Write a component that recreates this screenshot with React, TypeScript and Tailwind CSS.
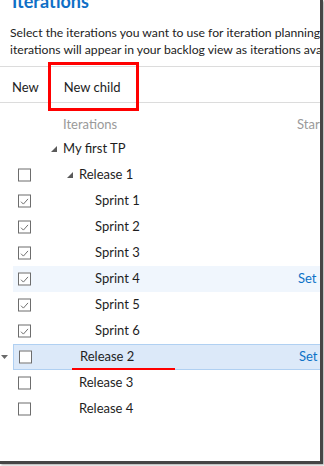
import * as React from 'react';

type Row = {
    label: string;
    level: 0 | 1 | 2;
    check: 'none' | 'off' | 'on';
    expand?: boolean;
    hover?: boolean;
    selected?: boolean;
    link?: boolean;
};

const rows: Row[] = [
    { label: 'My first TP', level: 0, check: 'none', expand: true },
    { label: 'Release 1', level: 1, check: 'off', expand: true },
    { label: 'Sprint 1', level: 2, check: 'on' },
    { label: 'Sprint 2', level: 2, check: 'on' },
    { label: 'Sprint 3', level: 2, check: 'on' },
    { label: 'Sprint 4', level: 2, check: 'on', hover: true, link: true },
    { label: 'Sprint 5', level: 2, check: 'on' },
    { label: 'Sprint 6', level: 2, check: 'on' },
    { label: 'Release 2', level: 1, check: 'off', selected: true, link: true },
    { label: 'Release 3', level: 1, check: 'off' },
    { label: 'Release 4', level: 1, check: 'off' },
];

function Expander() {
    return (
        <svg width="6" height="6" viewBox="0 0 6 6" className="shrink-0">
            <polygon points="6,0 6,6 0,6" fill="#5a5a5a" />
        </svg>
    );
}

function CheckBox({ checked }: { checked: boolean }) {
    return (
        <div className="w-[13px] h-[13px] border border-[#6d6d6d] bg-white flex items-center justify-center">
            {checked && (
                <svg width="9" height="8" viewBox="0 0 9 8">
                    <path d="M1 4.2 L3.4 6.6 L8 1.4" fill="none" stroke="#707070" strokeWidth="1" />
                </svg>
            )}
        </div>
    );
}

function TreeRow({ row }: { row: Row }) {
    const indent = row.level === 0 ? 'pl-[38px]' : row.level === 1 ? 'pl-[54px]' : 'pl-[82px]';
    return (
        <div
            className={
                'relative h-[26px] flex items-center ml-[13px] ' +
                (row.selected
                    ? 'bg-[#dce9f9] border border-[#b0d0f2]'
                    : row.hover
                        ? 'bg-[#f0f6fd]'
                        : '')
            }
        >
            <div className="absolute left-[5px] top-1/2 -translate-y-1/2">
                {row.check !== 'none' && <CheckBox checked={row.check === 'on'} />}
            </div>
            <div className={'flex items-center gap-[6px] ' + indent}>
                {row.expand ? <Expander /> : row.level !== 2 && <span className="w-[6px]" />}
                <span className="text-[13px] text-[#1e1e1e] whitespace-nowrap">{row.label}</span>
            </div>
            {row.link && (
                <span className="absolute left-[285px] text-[13px] text-[#0d72c7] whitespace-nowrap">Set dates</span>
            )}
            {row.selected && (
                <>
                    <span className="absolute left-[58px] top-[23px] w-[103px] h-[2px] bg-[#ff0000]" />
                    <span className="absolute -left-[13px] top-[10px]">
                        <svg width="7" height="4" viewBox="0 0 7 4">
                            <polygon points="0,0 7,0 3.5,4" fill="#6a6a6a" />
                        </svg>
                    </span>
                </>
            )}
        </div>
    );
}

export default function App() {
    return (
        <div
            className="w-[324px] h-[466px] bg-white overflow-hidden"
            style={{ fontFamily: 'Lato, "Noto Sans", sans-serif' }}
        >
            <div className="relative w-[323px] h-[464px] border-r-[3px] border-b-[3px] border-[#454545] shadow-[1px_1px_2px_rgba(0,0,0,0.35)] overflow-hidden">
                <div className="w-[400px]">
                    <h1 className="-mt-[10px] pl-[12px] text-[18px] leading-[22px] font-bold text-[#0f6fc6]">Iterations</h1>

                    <p className="mt-[12px] pl-[10px] text-[12.2px] leading-[17px] text-[#222] whitespace-nowrap">
                        Select the iterations you want to use for iteration planning. Selected
                        <br />
                        iterations will appear in your backlog view as iterations available
                    </p>

                    <div className="mt-[8px] border-t border-b border-[#dcdcdc] h-[37px] flex items-center gap-[25px] pl-[12px] text-[13px] text-[#222]">
                        <span className="pt-[6px]">New</span>
                        <span className="pt-[6px]">New child</span>
                    </div>

                    <div className="h-[33px] flex items-end pb-[2px] text-[13px] text-[#9a9a9a]">
                        <span className="pl-[63px] w-[297px]">Iterations</span>
                        <span>Start date</span>
                    </div>

                    <div className="flex flex-col">
                        {rows.map((r) => (
                            <TreeRow key={r.label} row={r} />
                        ))}
                    </div>
                </div>

                <div className="absolute left-[48px] top-[62px] w-[91px] h-[49px] border-[3px] border-[#ff0000]" />
            </div>
        </div>
    );
}
